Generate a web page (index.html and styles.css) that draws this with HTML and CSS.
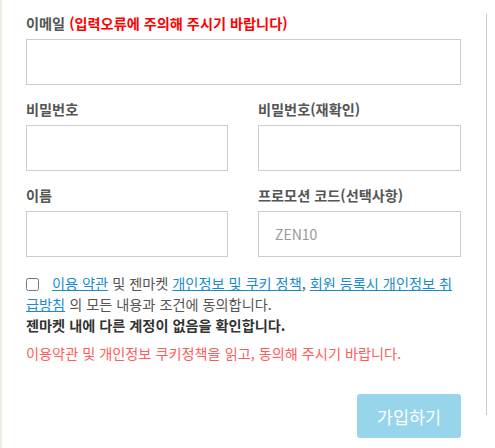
FILE: index.html
```html
<!DOCTYPE html>
<html lang="ko">
  <head>
    <meta charset="UTF-8" />
    <meta name="viewport" content="width=device-width, initial-scale=1.0" />
    <title>회원가입</title>
    <link rel="stylesheet" href="styles.css">
  </head>
  <body>
    <form class="signup">
      <div class="field">
        <label class="label">이메일 <span class="warn">(입력오류에 주의해 주시기 바랍니다)</span></label>
        <input class="input" type="email" />
      </div>
      <div class="row">
        <div class="field">
          <label class="label">비밀번호</label>
          <input class="input" type="password" />
        </div>
        <div class="field">
          <label class="label">비밀번호(재확인)</label>
          <input class="input" type="password" />
        </div>
      </div>
      <div class="row">
        <div class="field">
          <label class="label">이름</label>
          <input class="input" type="text" />
        </div>
        <div class="field">
          <label class="label">프로모션 코드(선택사항)</label>
          <input class="input" type="text" placeholder="ZEN10" />
        </div>
      </div>
      <div class="agree">
        <input class="check" type="checkbox" />
        <a href="#">이용 약관</a> 및 젠마켓 <a href="#">개인정보 및 쿠키 정책</a>, <a href="#">회원 등록시 개인정보 취급방침</a> 의 모든 내용과 조건에 동의합니다.
        <div class="confirm">젠마켓 내에 다른 계정이 없음을 확인합니다.</div>
      </div>
      <div class="notice">이용약관 및 개인정보 쿠키정책을 읽고, 동의해 주시기 바랍니다.</div>
      <div class="actions">
        <button class="submit" type="button">가입하기</button>
      </div>
    </form>
    <div class="rail"></div>
  </body>
</html>
```

FILE: styles.css
```css
body {
  margin: 0;
  font-family: "Noto Sans CJK KR", "Noto Sans", sans-serif;
  font-size: 14.2px;
  color: #555;
  background: #fff;
  border-left: 2px solid #efece4;
  display: flex;
  align-items: flex-start;
  height: 448px;
  box-sizing: border-box;
}

.signup {
  width: 435px;
  padding: 13px 0 0 24px;
}

.field {
  display: flex;
  flex-direction: column;
  flex: 1;
}

.label {
  font-weight: bold;
  line-height: 20px;
  margin-bottom: 6px;
  color: #555;
}

.warn {
  color: #f00;
}

.input {
  height: 46px;
  box-sizing: border-box;
  border: 1px solid #ccc;
  padding: 0 16px;
  font-family: inherit;
  font-size: 14px;
  color: #555;
  outline: none;
}

.input::placeholder {
  color: #999;
}

.row {
  display: flex;
  gap: 30px;
  margin-top: 14px;
}

.row .field {
  width: 202px;
  flex: none;
}

.row .field:last-child {
  width: 203px;
}

.agree {
  margin-top: 16px;
  line-height: 21px;
}

.check {
  width: 13px;
  height: 13px;
  margin: 0 9px 0 0;
  vertical-align: -2px;
}

.agree a {
  color: #1a8ad0;
}

.confirm {
  font-weight: bold;
  color: #333;
}

.notice {
  margin-top: 7px;
  line-height: 21px;
  color: #ff5c5c;
}

.actions {
  display: flex;
  justify-content: flex-end;
  margin-top: 30px;
}

.submit {
  width: 104px;
  height: 44px;
  border: none;
  border-radius: 3px;
  background: #96d5ea;
  color: #fff;
  font-family: inherit;
  font-size: 17.5px;
}

.rail {
  margin: 14px 0 0 25px;
  height: 401px;
  border-left: 1px solid #ccc;
}
```
